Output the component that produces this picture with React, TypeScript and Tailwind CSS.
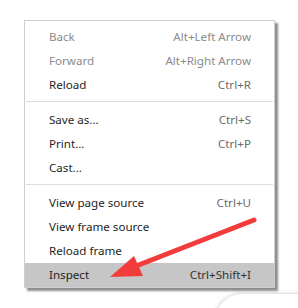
import React from 'react';

type Item = { label: string; shortcut?: string; disabled?: boolean; active?: boolean };

const groups: Item[][] = [
  [
    { label: 'Back', shortcut: 'Alt+Left Arrow', disabled: true },
    { label: 'Forward', shortcut: 'Alt+Right Arrow', disabled: true },
    { label: 'Reload', shortcut: 'Ctrl+R' },
  ],
  [
    { label: 'Save as...', shortcut: 'Ctrl+S' },
    { label: 'Print...', shortcut: 'Ctrl+P' },
    { label: 'Cast...' },
  ],
  [
    { label: 'View page source', shortcut: 'Ctrl+U' },
    { label: 'View frame source' },
    { label: 'Reload frame' },
    { label: 'Inspect', shortcut: 'Ctrl+Shift+I', active: true },
  ],
];

const MenuRow: React.FC<{ item: Item }> = ({ item }) => {
  const labelColor = item.disabled ? 'text-[#8a8a8a]' : 'text-[#1f1f1f]';
  const keyColor = item.disabled ? 'text-[#8a8a8a]' : item.active ? 'text-[#333333]' : 'text-[#6a6a6a]';
  return (
    <div
      className={`flex h-[24px] items-center justify-between pl-[24px] pr-[23px] ${
        item.active ? 'bg-[#c6c6c6]' : ''
      }`}
    >
      <span className={labelColor}>{item.label}</span>
      {item.shortcut && <span className={keyColor}>{item.shortcut}</span>}
    </div>
  );
};

const App: React.FC = () => {
  return (
    <div
      className="relative h-[308px] w-[298px] overflow-hidden bg-white pl-[24px] pt-[20px] text-[11.6px] leading-none"
      style={{ fontFamily: '"Segoe UI", "Noto Sans", "Open Sans", sans-serif' }}
    >
      <div className="w-[251px] border border-[#cfcfcf] bg-white pt-[4px] shadow-[3px_3px_2px_rgba(0,0,0,0.45)]">
        {groups.map((group, gi) => (
          <div key={gi}>
            {gi > 0 && (
              <div className="pb-[6px] pt-[4px] pl-[1px] pr-[1px]">
                <div className="h-px bg-[#dcdcdc]" />
              </div>
            )}
            {group.map((item) => (
              <MenuRow key={item.label} item={item} />
            ))}
          </div>
        ))}
      </div>

      {/* corner of whatever sits below the menu */}
      <div className="absolute left-[214px] top-[293px] h-[40px] w-[120px] rounded-tl-[28px] border-l border-t border-[#e4e4e4] bg-white shadow-[-1px_-1px_3px_rgba(0,0,0,0.08)]" />

      {/* red annotation arrow */}
      <svg className="pointer-events-none absolute left-0 top-0" width="298" height="308" viewBox="0 0 298 308">
        <line x1="254" y1="220" x2="136" y2="266" stroke="#f23c3c" strokeWidth="5" strokeLinecap="round" />
        <polygon points="110,277 134,256 143,276" fill="#f23c3c" />
      </svg>
    </div>
  );
};

export default App;
